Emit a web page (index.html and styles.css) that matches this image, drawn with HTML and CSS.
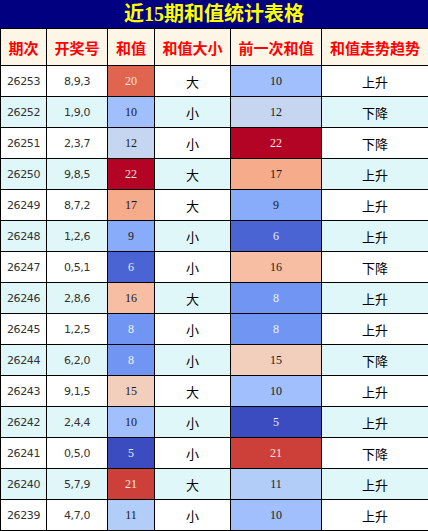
FILE: index.html
```html
<!DOCTYPE html>
<html lang="zh-CN">

<head>
    <meta charset="UTF-8">
    <meta name="viewport" content="width=device-width, initial-scale=1.0">
    <title>近15期和值统计表格</title>
    <link rel="stylesheet" href="styles.css">
</head>

<body>
    <div class="title">近15期和值统计表格</div>
    <table class="stats">
        <colgroup>
            <col class="c-issue">
            <col class="c-draw">
            <col class="c-sum">
            <col class="c-size">
            <col class="c-prev">
            <col class="c-trend">
        </colgroup>
        <thead>
            <tr>
                <th>期次</th>
                <th>开奖号</th>
                <th>和值</th>
                <th>和值大小</th>
                <th>前一次和值</th>
                <th>和值走势趋势</th>
            </tr>
        </thead>
        <tbody>
            <tr><td class="issue">26253</td><td class="draw">8,9,3</td><td class="num h20">20</td><td class="cn">大</td><td class="num h10">10</td><td class="cn">上升</td></tr>
            <tr><td class="issue">26252</td><td class="draw">1,9,0</td><td class="num h10">10</td><td class="cn">小</td><td class="num h12">12</td><td class="cn">下降</td></tr>
            <tr><td class="issue">26251</td><td class="draw">2,3,7</td><td class="num h12">12</td><td class="cn">小</td><td class="num h22">22</td><td class="cn">下降</td></tr>
            <tr><td class="issue">26250</td><td class="draw">9,8,5</td><td class="num h22">22</td><td class="cn">大</td><td class="num h17">17</td><td class="cn">上升</td></tr>
            <tr><td class="issue">26249</td><td class="draw">8,7,2</td><td class="num h17">17</td><td class="cn">大</td><td class="num h9">9</td><td class="cn">上升</td></tr>
            <tr><td class="issue">26248</td><td class="draw">1,2,6</td><td class="num h9">9</td><td class="cn">小</td><td class="num h6">6</td><td class="cn">上升</td></tr>
            <tr><td class="issue">26247</td><td class="draw">0,5,1</td><td class="num h6">6</td><td class="cn">小</td><td class="num h16">16</td><td class="cn">下降</td></tr>
            <tr><td class="issue">26246</td><td class="draw">2,8,6</td><td class="num h16">16</td><td class="cn">大</td><td class="num h8">8</td><td class="cn">上升</td></tr>
            <tr><td class="issue">26245</td><td class="draw">1,2,5</td><td class="num h8">8</td><td class="cn">小</td><td class="num h8">8</td><td class="cn">上升</td></tr>
            <tr><td class="issue">26244</td><td class="draw">6,2,0</td><td class="num h8">8</td><td class="cn">小</td><td class="num h15">15</td><td class="cn">下降</td></tr>
            <tr><td class="issue">26243</td><td class="draw">9,1,5</td><td class="num h15">15</td><td class="cn">大</td><td class="num h10">10</td><td class="cn">上升</td></tr>
            <tr><td class="issue">26242</td><td class="draw">2,4,4</td><td class="num h10">10</td><td class="cn">小</td><td class="num h5">5</td><td class="cn">上升</td></tr>
            <tr><td class="issue">26241</td><td class="draw">0,5,0</td><td class="num h5">5</td><td class="cn">小</td><td class="num h21">21</td><td class="cn">下降</td></tr>
            <tr><td class="issue">26240</td><td class="draw">5,7,9</td><td class="num h21">21</td><td class="cn">大</td><td class="num h11">11</td><td class="cn">上升</td></tr>
            <tr><td class="issue">26239</td><td class="draw">4,7,0</td><td class="num h11">11</td><td class="cn">小</td><td class="num h10">10</td><td class="cn">上升</td></tr>
        </tbody>
    </table>
</body>

</html>
```

FILE: styles.css
```css
/* Basic Reset */
* {
    margin: 0;
    padding: 0;
    box-sizing: border-box;
}

body {
    width: 428px;
    background-color: #fff;
    font-family: "Liberation Sans", "Noto Sans CJK SC", sans-serif;
}

/* Title bar */
.title {
    height: 28px;
    line-height: 28px;
    background-color: #000080;
    color: #ffff00;
    font-family: "Liberation Serif", "Noto Sans CJK SC", serif;
    font-size: 20px;
    font-weight: bold;
    text-align: center;
}

/* Table */
.stats {
    width: 428px;
    border-collapse: collapse;
    table-layout: fixed;
}

.c-issue { width: 46px; }
.c-draw { width: 61px; }
.c-sum { width: 47px; }
.c-size { width: 76px; }
.c-prev { width: 91px; }
.c-trend { width: 107px; }

.stats th,
.stats td {
    border: 1px solid #000;
    text-align: center;
    vertical-align: middle;
}

.stats th {
    height: 37px;
    background-color: #fdf5e6;
    color: #ff0000;
    font-family: "Noto Sans CJK SC", sans-serif;
    font-size: 15px;
    font-weight: bold;
}

.stats td {
    height: 31px;
    color: #333;
}

.stats tbody tr:nth-child(even) {
    background-color: #e0f7fa;
}

.stats .issue,
.stats .draw {
    font-size: 11px;
    font-family: "DejaVu Sans", sans-serif;
    letter-spacing: -0.4px;
}

.stats .num {
    font-family: "Liberation Serif", serif;
    font-size: 12px;
    color: #1a1a1a;
}

.stats .cn {
    font-family: "Noto Sans CJK SC", sans-serif;
    font-size: 13px;
    color: #000;
}

/* Heat colours for sums */
.stats .h5 { background-color: #3a4cc0; color: #e8ecff; }
.stats .h6 { background-color: #4b64d4; color: #e8ecff; }
.stats .h8 { background-color: #7095f2; color: #eef2ff; }
.stats .h9 { background-color: #88abfa; }
.stats .h10 { background-color: #a0bffc; }
.stats .h11 { background-color: #b3cdf9; }
.stats .h12 { background-color: #c6d6f1; }
.stats .h15 { background-color: #f2cfbd; }
.stats .h16 { background-color: #f7bea4; }
.stats .h17 { background-color: #f6ab8b; }
.stats .h20 { background-color: #e0654f; color: #fbe4df; }
.stats .h21 { background-color: #cd403a; color: #fbe4df; }
.stats .h22 { background-color: #b40426; color: #fbe4df; }
```
